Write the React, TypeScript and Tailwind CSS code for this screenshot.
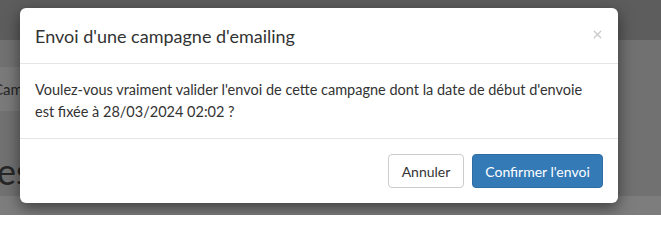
import { X } from "lucide-react";

const font = { fontFamily: "Lato, 'Open Sans', sans-serif" };

function Backdrop() {
  // the page under the overlay, already dimmed
  return (
    <div className="flex h-[215px] w-[661px] flex-col bg-[#717171]">
      <div className="h-[40px] shrink-0 bg-[#5d5d5d]" />
      <div className="h-[27px] shrink-0" />
      <div className="flex h-[44px] w-[300px] shrink-0 items-center overflow-hidden bg-[#7a7a7a]">
        <span className="-ml-[7px] whitespace-nowrap text-[15px] text-[#262626]">
          Campagnes
        </span>
      </div>
      <div className="h-[40px] shrink-0" />
      <div className="-ml-[3px] h-[40px] shrink-0 overflow-hidden text-[36px] leading-[40px] text-[#262626]">
        es
      </div>
      <div className="h-[5px] shrink-0" />
      <div className="h-[19px] shrink-0 bg-[#7d7d7d]" />
    </div>
  );
}

export default function App() {
  return (
    <div
      className="relative h-[215px] w-[661px] overflow-hidden bg-[#7d7d7d] text-[#333]"
      style={font}
    >
      <Backdrop />

      <div className="absolute left-[20px] top-[8px] w-[598px] rounded-[6px] bg-white shadow-[0_5px_15px_rgba(0,0,0,0.5)]">
        <div className="flex items-start justify-between border-b border-[#e5e5e5] px-[15px] pb-[14px] pt-[15px]">
          <h4 className="text-[18px] leading-[26px] text-[#333]">
            Envoi d'une campagne d'emailing
          </h4>
          <button className="-mr-[1px] mt-[5px] text-[#c8c8c8]" aria-label="Fermer">
            <X className="h-[13px] w-[13px]" strokeWidth={2.25} />
          </button>
        </div>

        <div className="border-b border-[#e5e5e5] p-[15px] text-[14.5px] leading-[22px]">
          Voulez-vous vraiment valider l'envoi de cette campagne dont la date de
          début d'envoie est fixée à 28/03/2024 02:02&#8239;?
        </div>

        <div className="flex justify-end gap-[8px] p-[15px]">
          <button className="h-[34px] w-[76px] rounded-[4px] border border-[#ccc] bg-white text-[14px] text-[#333]">
            Annuler
          </button>
          <button className="h-[34px] w-[131px] rounded-[4px] border border-[#2e6da4] bg-[#337ab7] text-[14px] text-white">
            Confirmer l'envoi
          </button>
        </div>
      </div>
    </div>
  );
}
